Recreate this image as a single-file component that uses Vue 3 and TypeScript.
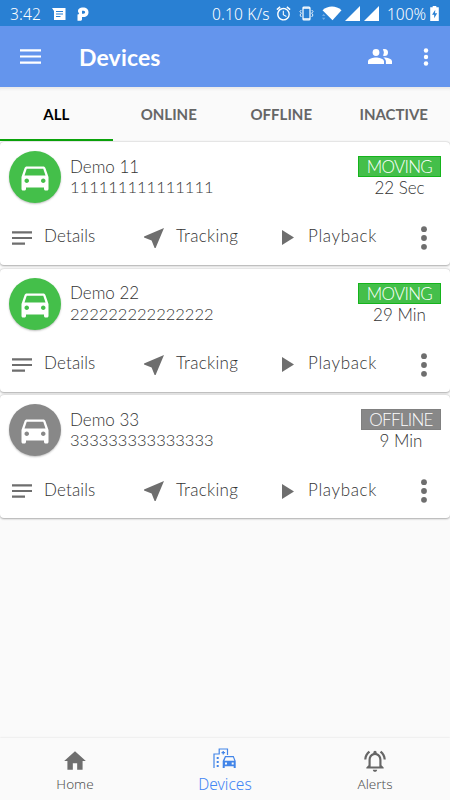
<script setup lang="ts">
import { ref } from 'vue'

interface Device {
  name: string
  imei: string
  status: 'MOVING' | 'OFFLINE'
  since: string
}

const tabs = ['ALL', 'ONLINE', 'OFFLINE', 'INACTIVE']
const activeTab = ref('ALL')

const devices: Device[] = [
  { name: 'Demo 11', imei: '111111111111111', status: 'MOVING', since: '22 Sec' },
  { name: 'Demo 22', imei: '222222222222222', status: 'MOVING', since: '29 Min' },
  { name: 'Demo 33', imei: '333333333333333', status: 'OFFLINE', since: '9 Min' },
]
</script>

<template>
  <div class="screen">
    <div class="status-bar">
      <span class="clock">3:42</span>
      <svg class="message" viewBox="0 0 14 12">
        <path fill="#fff" d="M0 0h13.500v12H2V3z" />
        <path stroke="#2980d3" stroke-width="1.1" d="M4 3.500h7M4 6h7M4 8.500h4.500" />
      </svg>
      <svg class="p-logo" viewBox="0 0 12 14">
        <path fill="#fff" fill-rule="evenodd" d="M1 4.500C1 1.500 3 .5 6 .5c3.500 0 5.500 2 5.500 4.700S9.500 10 6.500 10H5v2.200C5 13.300 4 13.700 3 13.700H.5V7.500L2.200 7zM5 3.800v3h1.500c2.200 0 2.200-3 0-3z" />
      </svg>
      <span class="speed">0.10 K/s</span>
      <svg class="alarm" viewBox="0 0 24 24" fill="#fff">
        <path d="M22 5.720l-4.600-3.860-1.290 1.530 4.600 3.860L22 5.720zM7.880 3.390L6.600 1.860 2 5.710l1.290 1.530 4.590-3.850zM12.500 8H11v6l4.750 2.850.75-1.230-4-2.370V8zM12 4c-4.970 0-9 4.030-9 9s4.020 9 9 9a9 9 0 0 0 0-18zm0 16c-3.870 0-7-3.130-7-7s3.130-7 7-7 7 3.130 7 7-3.130 7-7 7z" />
      </svg>
      <svg class="vibrate" viewBox="0 0 15 15" fill="none" stroke="#fff">
        <rect x="4" y="1" width="7" height="13" rx="1" stroke-width="1.200" />
        <path d="M4 2h7M4 13h7" stroke-width="1.300" />
        <path d="M2.300 4L1 5.500l1.300 1.700L1 9l1.300 2M12.700 4L14 5.500l-1.300 1.700L14 9l-1.300 2" stroke-width=".9" />
      </svg>
      <svg class="wifi" viewBox="0 0 20 15">
        <path fill="#fff" d="M.5 4.300C6-.7 14-.7 19.500 4.300L10.500 14.300z" />
        <path fill="#70aae4" d="M0 10l1.700-2.300L3.400 10zM0 11.700h3.400L1.700 14z" />
      </svg>
      <svg class="signal" viewBox="0 0 15 15"><path fill="#fff" d="M15 0v15H0z" /></svg>
      <svg class="signal" viewBox="0 0 15 15"><path fill="#fff" d="M15 0v15H0z" /></svg>
      <span class="percent">100%</span>
      <svg class="battery" viewBox="0 0 8 14">
        <path fill="#fff" d="M2.300 0h3.400v1.200H8V14H0V1.200h2.300z" />
        <path fill="#2980d3" d="M4.700 3.500L1.700 8.200h2v3.300l2.800-4.700h-2z" />
      </svg>
    </div>

    <header class="app-bar">
      <svg class="menu" viewBox="0 0 21 15"><path stroke="#fff" stroke-width="2.200" d="M0 1.300h21M0 7.500h21M0 13.700h21" /></svg>
      <h1>Devices</h1>
      <svg class="people" viewBox="0 0 24 15" fill="#fff">
        <circle cx="8" cy="3.500" r="3.400" />
        <path d="M16.500 7a3.500 3.500 0 1 0 0-7c-.6 0-1.200.1-1.700.4a5.500 5.500 0 0 1 0 6.200c.5.3 1.100.4 1.700.4z" />
        <path d="M8 8.500c-2.700 0-8 1.200-8 3.800V15h16v-2.700c0-2.600-5.300-3.800-8-3.800zM16.300 8.500l-1 .1c1.500 1 2.600 2.200 2.600 3.700V15H24v-2.700c0-2.600-5-3.800-7.700-3.800z" />
      </svg>
      <svg class="bar-more" viewBox="0 0 6 18" fill="#fff">
        <circle cx="3" cy="2.500" r="2.200" /><circle cx="3" cy="9" r="2.200" /><circle cx="3" cy="15.500" r="2.200" />
      </svg>
    </header>

    <nav class="tabs">
      <button
        v-for="tab in tabs"
        :key="tab"
        class="tab"
        :class="{ active: tab === activeTab }"
        @click="activeTab = tab"
      >{{ tab }}</button>
    </nav>

    <main class="list">
      <article v-for="device in devices" :key="device.imei" class="card" :class="device.status.toLowerCase()">
        <div class="summary">
          <div class="avatar">
            <svg viewBox="0 0 24 24" fill="#fff">
              <path d="M18.920 6.010C18.720 5.420 18.160 5 17.500 5h-11c-.66 0-1.210.42-1.420 1.010L3 12v8c0 .55.45 1 1 1h1c.55 0 1-.45 1-1v-1h12v1c0 .55.45 1 1 1h1c.55 0 1-.45 1-1v-8l-2.080-5.990zM6.500 16c-.83 0-1.500-.67-1.500-1.500S5.670 13 6.500 13s1.500.67 1.500 1.500S7.330 16 6.500 16zm11 0c-.83 0-1.500-.67-1.500-1.500s.67-1.500 1.500-1.500 1.500.67 1.500 1.500-.67 1.500-1.500 1.500zM5 11l1.500-4.500h11L19 11H5z" />
            </svg>
          </div>
          <div class="identity">
            <div class="name">{{ device.name }}</div>
            <div class="imei">{{ device.imei }}</div>
          </div>
          <div class="state">
            <div class="badge">{{ device.status }}</div>
            <div class="since">{{ device.since }}</div>
          </div>
        </div>
        <div class="actions">
          <div class="action details">
            <svg viewBox="0 0 20 14"><path stroke="#6e6e6e" stroke-width="2.200" d="M0 1.300h20M0 7h20M0 12.700h13" /></svg>
            <span>Details</span>
          </div>
          <div class="action tracking">
            <svg viewBox="0 0 20 20"><path fill="#6e6e6e" d="M20 0L0 8.400v1l7.600 3 3 7.600h1z" /></svg>
            <span>Tracking</span>
          </div>
          <div class="action playback">
            <svg viewBox="0 0 12 15"><path fill="#6e6e6e" d="M0 0l12 7.500L0 15z" /></svg>
            <span>Playback</span>
          </div>
          <svg class="more" viewBox="0 0 6 24" fill="#6e6e6e">
            <circle cx="3" cy="3.200" r="2.900" /><circle cx="3" cy="12" r="2.900" /><circle cx="3" cy="20.800" r="2.900" />
          </svg>
        </div>
      </article>
    </main>

    <nav class="bottom-nav">
      <div class="nav-item home">
        <svg viewBox="0 0 24 24"><path fill="#6e6e6e" d="M10 20v-6h4v6h5v-8h3L12 3 2 12h3v8z" /></svg>
        <span>Home</span>
      </div>
      <div class="nav-item current">
        <svg viewBox="0 0 24 22">
          <path fill="none" stroke="#4285e8" stroke-width="1.200" d="M1 20V6h5.200V1h8.300v6" />
          <path fill="#4285e8" d="M3.700 9h2v2h-2zM3.700 13h2v2h-2zM3.700 17h2v2h-2zM8.500 4h3.600v1.300H8.500zM9.600 3h1.300v3.500H9.600z" />
          <path fill="#4285e8" fill-rule="evenodd" d="M12 8h8.700l2 5v7h-2v-1.700h-9V20h-2v-7zM12.800 9.300l-1.300 3.500h9.800L20 9.300zM12 14.500v2h2v-2zM18.700 14.500v2h2v-2z" />
        </svg>
        <span>Devices</span>
      </div>
      <div class="nav-item alerts">
        <svg viewBox="0 0 24 24"><path fill="#666" d="M7.580 4.080L6.150 2.650C3.750 4.480 2.170 7.300 2.030 10.500h2c.15-2.650 1.510-4.970 3.550-6.420zM19.970 10.500h2c-.15-3.200-1.730-6.020-4.120-7.850l-1.420 1.430c2.020 1.450 3.390 3.770 3.540 6.420zM18 11c0-3.070-1.640-5.640-4.500-6.320V4a1.500 1.500 0 0 0-3 0v.68C7.630 5.360 6 7.920 6 11v5l-2 2v1h16v-1l-2-2v-5zm-2 6H8v-6c0-2.480 1.510-4.500 4-4.500s4 2.020 4 4.500v6zm-4 5c1.100 0 2-.9 2-2h-4c0 1.100.89 2 2 2z" /></svg>
        <span>Alerts</span>
      </div>
    </nav>
  </div>
</template>

<style>
body {
  margin: 0;
}
</style>

<style scoped>
.screen {
  width: 450px;
  height: 800px;
  display: flex;
  flex-direction: column;
  overflow: hidden;
  background: #fafafa;
  font-family: Lato, "Noto Sans", sans-serif;
  white-space: nowrap;
}
svg {
  display: block;
  flex: none;
}
.status-bar {
  height: 26px;
  flex: none;
  display: flex;
  align-items: center;
  padding: 1px 11px 0 10px;
  box-sizing: border-box;
  background: #2980d3;
  color: #fff;
  font-family: "Noto Sans", sans-serif;
  font-size: 15.500px;
  font-weight: 300;
}
.clock {
  width: 42px;
  letter-spacing: 0.2px;
}
.message {
  width: 14px;
  height: 12px;
}
.p-logo {
  width: 12px;
  height: 14px;
  margin-left: 11px;
}
.speed {
  margin-left: auto;
  width: 58px;
  letter-spacing: 0.2px;
}
.alarm {
  width: 17px;
  height: 17px;
  margin-left: 5px;
}
.vibrate {
  width: 15px;
  height: 15px;
  margin-left: 7px;
}
.wifi {
  width: 20px;
  height: 15px;
  margin-left: 8px;
}
.signal {
  width: 15px;
  height: 15px;
  margin-left: 3px;
}
.signal + .signal {
  margin-left: 4px;
}
.percent {
  width: 39px;
  margin-left: 8px;
}
.battery {
  width: 9px;
  height: 15px;
  margin-left: 4px;
}
.app-bar {
  height: 61px;
  flex: none;
  display: flex;
  align-items: center;
  padding: 0 21px 0 20px;
  box-sizing: border-box;
  background: #6495ed;
  color: #fff;
}
.menu {
  width: 21px;
  height: 15px;
}
h1 {
  margin: 0 auto 0 38px;
  font-size: 23px;
  line-height: 26px;
  font-weight: 700;
  letter-spacing: 0.150px;
}
.people {
  width: 24px;
  height: 15px;
}
.bar-more {
  width: 6px;
  height: 18px;
  margin-left: 31px;
}
.tabs {
  height: 54px;
  flex: none;
  display: grid;
  grid-template-columns: repeat(4, 1fr);
  box-shadow: inset 0 4px 3px -2px #e8e8e8;
}
.tab {
  border: 0;
  border-bottom: 2px solid transparent;
  background: none;
  padding: 2px 0 0;
  color: #666;
  font: 700 15px/20px Lato, sans-serif;
}
.tab.active {
  color: #000;
  border-bottom-color: #0ba30b;
}
.list {
  flex: 1;
  display: flex;
  flex-direction: column;
  gap: 3.700px;
  padding-top: 1px;
}
.card {
  height: 123px;
  flex: none;
  box-sizing: border-box;
  padding: 9px 9px 0;
  border-radius: 4px;
  background: #fff;
  box-shadow: 0 0.500px 2px rgba(0, 0, 0, 0.32);
  color: #333;
  font-size: 17px;
  font-weight: 300;
  line-height: 21.300px;
}
.summary {
  display: flex;
  height: 69px;
}
.avatar {
  width: 52px;
  height: 52px;
  flex: none;
  display: grid;
  place-items: center;
  border-radius: 50%;
  background: #44bf4a;
  box-shadow: 0 1px 2px rgba(0, 0, 0, 0.25);
}
.avatar svg {
  width: 36px;
  height: 36px;
}
.offline .avatar {
  background: #888;
}
.identity {
  margin-left: 9px;
  padding-top: 4.700px;
}
.imei {
  font-size: 16.500px;
}
.state {
  margin: 5px 0 0 auto;
  width: 83px;
  text-align: center;
}
.offline .state {
  width: 80px;
}
.badge {
  height: 21px;
  box-sizing: border-box;
  border: 1px solid #15b41c;
  background: #44bf4a;
  color: #fff;
  line-height: 20px;
  font-size: 17px;
  letter-spacing: -0.700px;
}
.offline .badge {
  background: #888;
  border-color: #808080;
}
.actions {
  display: grid;
  grid-template-columns: 132px 135px 135px 1fr;
  align-items: center;
  height: 36px;
  padding-left: 3px;
}
.action {
  display: flex;
  align-items: center;
}
.action span {
  margin-bottom: 4px;
  letter-spacing: 0.300px;
}
.action.details span {
  letter-spacing: 0.150px;
}
.action.playback span {
  letter-spacing: 0.650px;
}
.details svg {
  width: 20px;
  height: 14px;
  margin-right: 12px;
}
.tracking svg {
  width: 20px;
  height: 20px;
  margin-right: 12px;
}
.playback svg {
  width: 12px;
  height: 15px;
  margin: 0 14px 0 3px;
}
.more {
  width: 6px;
  height: 24px;
  margin-left: 6.500px;
}
.bottom-nav {
  height: 62px;
  flex: none;
  display: grid;
  grid-template-columns: repeat(3, 1fr);
  box-shadow: 0 0 2px rgba(0, 0, 0, 0.13);
}
.nav-item {
  display: flex;
  flex-direction: column;
  align-items: center;
  padding-top: 10px;
  color: #555;
  font-family: "Noto Sans", sans-serif;
  font-size: 13.500px;
  font-weight: 300;
  line-height: 20px;
}
.nav-item svg {
  width: 26px;
  height: 26px;
}
.nav-item.current {
  color: #4285f4;
  font-size: 15.500px;
}
.nav-item.current svg {
  width: 24px;
  height: 22px;
  margin-bottom: 4px;
}
</style>
